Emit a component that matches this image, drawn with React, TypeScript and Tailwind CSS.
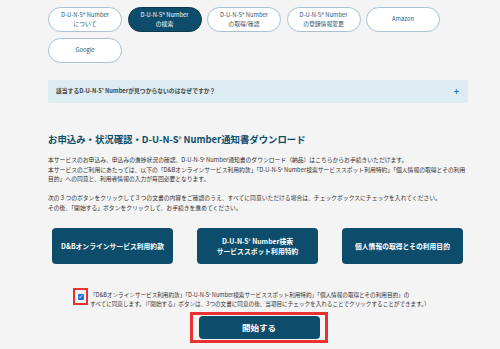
import React from 'react'

const font = { fontFamily: '"Noto Sans CJK JP", "Noto Sans", sans-serif' }

const navItems = [
  { label: ['D-U-N-S® Number', 'について'], active: false },
  { label: ['D-U-N-S® Number', 'の検索'], active: true },
  { label: ['D-U-N-S® Number', 'の取得/確認'], active: false },
  { label: ['D-U-N-S® Number', 'の登録情報変更'], active: false },
  { label: ['Amazon'], active: false },
  { label: ['Google'], active: false },
]

function Duns() {
  return (
    <>
      D-U-N-S<sup className="text-[0.6em] leading-none relative -top-[0.2em]">®</sup> Number
    </>
  )
}

export default function App() {
  return (
    <div className="w-[500px] h-[349px] bg-[#f4f4f4] overflow-hidden" style={font}>
      <div className="ml-[48px] w-[420px] pt-[7px]">
        <div className="flex flex-wrap gap-x-[5.5px] gap-y-[6px]">
          {navItems.map((item, i) => (
            <div
              key={i}
              className={`w-[74px] h-[25px] rounded-full flex flex-col items-center justify-center text-[5.8px] leading-[8.5px] ${
                item.active
                  ? 'bg-[#0d4d6b] border border-[#0a3a52] text-white'
                  : 'bg-white border-[1.5px] border-[#a9c1d1] text-[#2a5673]'
              }`}
            >
              {item.label.map((l, j) => (
                <span key={j}>{l}</span>
              ))}
            </div>
          ))}
        </div>

        <div className="mt-[17px] h-[23px] bg-[#dcecf0] rounded-[2px] flex items-center justify-between pl-[8px] pr-[9px]">
          <span className="text-[5.8px] font-bold text-[#444]">
            該当するD-U-N-S<sup className="text-[0.6em] leading-none">®</sup> Numberが見つからないのはなぜですか？
          </span>
          <span className="text-[#1a6fc0] font-bold text-[9px] leading-none">+</span>
        </div>

        <h2 className="mt-[30px] text-[9.4px] font-bold text-[#0d4d6b] leading-[12px]">
          お申込み・状況確認・<Duns />通知書ダウンロード
        </h2>

        <div className="mt-[10px] text-[5.8px] leading-[9.5px] text-[#333]">
          <p>
            本サービスのお申込み、申込みの進捗状況の確認、<Duns />通知書のダウンロード（納品）はこちらからお手続きいただけます。
          </p>
          <p>
            本サービスのご利用にあたっては、以下の「D&amp;Bオンラインサービス利用約款」「<Duns />検索サービススポット利用特約」「個人情報の取得とその利用目的」への同意と、利用者情報の入力が毎回必要となります。
          </p>
          <p className="mt-[9.5px]">
            次の３つのボタンをクリックして３つの文書の内容をご確認のうえ、すべてに同意いただける場合は、チェックボックスにチェックを入れてください。
          </p>
          <p>その後、「開始する」ボタンをクリックして、お手続きを進めてください。</p>
        </div>

        <div className="mt-[16px] ml-[4px] w-[412px] flex gap-[24px]">
          <div className="w-[121px] h-[36px] bg-[#0d4d6b] rounded-[4px] flex items-center justify-center text-white font-bold text-[6.8px] leading-[10.5px] text-center">
            D&amp;Bオンラインサービス利用約款
          </div>
          <div className="w-[121px] h-[36px] bg-[#0d4d6b] rounded-[4px] flex flex-col items-center justify-center text-white font-bold text-[6.8px] leading-[10.5px] text-center">
            <span>
              <Duns />検索
            </span>
            <span>サービススポット利用特約</span>
          </div>
          <div className="w-[121px] h-[36px] bg-[#0d4d6b] rounded-[4px] flex items-center justify-center text-white font-bold text-[6.8px] leading-[10.5px] text-center">
            個人情報の取得とその利用目的
          </div>
        </div>

        <div className="mt-[24px] ml-[25px] flex items-start">
          <div className="w-[15px] h-[17px] border-[2.5px] border-[#e8322f] flex items-center justify-center shrink-0">
            <div className="w-[6px] h-[6px] bg-[#1a73d9] rounded-[1px] flex items-center justify-center">
              <svg width="5" height="5" viewBox="0 0 10 10">
                <path d="M2 5.5 L4 7.5 L8 2.5" stroke="white" strokeWidth="1.8" fill="none" />
              </svg>
            </div>
          </div>
          <div className="ml-[2px] mt-[3px] text-[5.6px] leading-[8.5px] text-[#333]">
            <p>
              「D&amp;Bオンラインサービス利用約款」「<Duns />検索サービススポット利用特約」「個人情報の取得とその利用目的」の
            </p>
            <p>すべてに同意します。（「開始する」ボタンは、3つの文書に同意の後、当項目にチェックを入れることでクリックすることができます。）</p>
          </div>
        </div>

        <div className="mt-[4px] ml-[142px] w-[138px] h-[31px] border-[3px] border-[#e8322f] flex items-center justify-center">
          <div className="w-[121px] h-[23px] bg-[#0d4d6b] rounded-[4px] flex items-center justify-center text-white font-bold text-[8.5px]">
            開始する
          </div>
        </div>
      </div>
    </div>
  )
}
